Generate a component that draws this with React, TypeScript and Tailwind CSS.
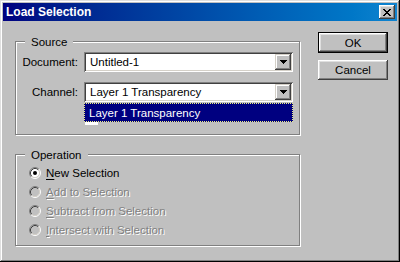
import React from 'react';

const raised =
  'shadow-[inset_-1px_-1px_#404040,inset_1px_1px_#fff,inset_-2px_-2px_#808080,inset_2px_2px_#dfdfdf]';
const sunken =
  'shadow-[inset_1px_1px_#808080,inset_-1px_-1px_#fff,inset_2px_2px_#404040,inset_-2px_-2px_#d4d0c8]';

function Combo({ value, children }: { value: string; children?: React.ReactNode }) {
  return (
    <div className={`relative flex h-[20px] w-[209px] items-center bg-white ${sunken}`}>
      <span className="flex-1 pl-[6px] leading-[14px] text-black">{value}</span>
      <div
        className={`mr-[2px] flex h-[16px] w-[16px] items-center justify-center bg-[#c0c0c0] shadow-[inset_-1px_-1px_#404040,inset_1px_1px_#d4d0c8,inset_-2px_-2px_#808080,inset_2px_2px_#fff]`}
      >
        <svg width="7" height="4" viewBox="0 0 7 4" shapeRendering="crispEdges">
          <polygon points="0,0 7,0 3.5,4" fill="#000" />
        </svg>
      </div>
      {children}
    </div>
  );
}

function Radio({ checked, disabled }: { checked?: boolean; disabled?: boolean }) {
  return (
    <svg width="12" height="12" viewBox="0 0 12 12">
      <circle cx="6" cy="6" r="4.5" fill={disabled ? '#c0c0c0' : '#fff'} />
      <path d="M2.11 9.89 A5.5 5.5 0 0 1 9.89 2.11" stroke="#808080" fill="none" />
      <path d="M9.89 2.11 A5.5 5.5 0 0 1 2.11 9.89" stroke="#fff" fill="none" />
      <path d="M2.82 9.18 A4.5 4.5 0 0 1 9.18 2.82" stroke="#404040" fill="none" />
      <path d="M9.18 2.82 A4.5 4.5 0 0 1 2.82 9.18" stroke="#d4d0c8" fill="none" />
      {checked && <circle cx="6" cy="6" r="2" fill="#000" />}
    </svg>
  );
}

function Group({ title, className, children }: { title: string; className: string; children: React.ReactNode }) {
  return (
    <div
      className={`relative w-[285px] border border-[#808080] shadow-[inset_1px_1px_#fff,1px_1px_#fff] ${className}`}
    >
      <span className="absolute left-[9px] top-[-7px] bg-[#c0c0c0] px-[6px] leading-[14px] text-black">
        {title}
      </span>
      {children}
    </div>
  );
}

const operations = [
  { key: 'N', rest: 'ew Selection', checked: true },
  { key: 'A', rest: 'dd to Selection' },
  { key: 'S', rest: 'ubtract from Selection' },
  { key: 'I', rest: 'ntersect with Selection' },
];

export default function App() {
  return (
    <div className="h-[262px] w-[400px] bg-[#c0c0c0] p-[3px] font-['Liberation_Sans',Arial,sans-serif] text-[11.5px] shadow-[inset_-1px_-1px_#000,inset_1px_1px_#dfdfdf,inset_-2px_-2px_#808080,inset_2px_2px_#fff]">
      {/* title bar */}
      <div className="flex h-[18px] items-center justify-between bg-gradient-to-r from-[#000080] to-[#1084d0] pl-[3px] pr-[2px]">
        <span className="text-[12px] font-bold leading-[18px] text-white">Load Selection</span>
        <div className={`flex h-[14px] w-[16px] items-center justify-center bg-[#c0c0c0] ${raised}`}>
          <svg width="8" height="7" viewBox="0 0 8 7" shapeRendering="crispEdges">
            <path d="M0 0h2v1h-2zM6 0h2v1h-2zM1 1h2v1h-2zM5 1h2v1h-2zM2 2h4v1h-4zM3 3h2v1h-2zM2 4h4v1h-4zM1 5h2v1h-2zM5 5h2v1h-2zM0 6h2v1h-2zM6 6h2v1h-2z" fill="#000" />
          </svg>
        </div>
      </div>

      {/* body */}
      <div className="flex items-start pl-[12px]">
        <div className="mt-[20px] flex flex-col gap-[19px]">
          <Group title="Source" className="h-[94px] pt-[10px]">
            <div className="flex flex-col gap-[10px]">
              <div className="flex items-center gap-[6px]">
                <span className="w-[62px] text-right leading-[14px] text-black">Document:</span>
                <Combo value="Untitled-1" />
              </div>
              <div className="flex items-center gap-[6px]">
                <span className="w-[62px] text-right leading-[14px] text-black">Channel:</span>
                <Combo value="Layer 1 Transparency">
                  <div className="absolute left-0 top-[21px] flex h-[19px] w-[209px] items-center border border-dotted border-[#f0f080] bg-[#000080] pl-[4px] leading-[14px] text-white">
                    Layer 1 Transparency
                  </div>
                  <div className="absolute left-[1px] top-[40px] h-[3px] w-[13px] bg-white" />
                </Combo>
              </div>
            </div>
          </Group>

          <Group title="Operation" className="h-[92px] pt-[8px]">
            <div className="flex flex-col">
              {operations.map((op, i) => {
                const disabled = !op.checked;
                return (
                  <div key={i} className="flex h-[19px] items-center gap-[5px] pl-[13px]">
                    <Radio checked={op.checked} disabled={disabled} />
                    <span
                      className={
                        disabled
                          ? 'leading-[14px] text-[#808080] [text-shadow:1px_1px_0_#fff]'
                          : 'leading-[14px] text-black'
                      }
                    >
                      <span className="underline underline-offset-[2px]">{op.key}</span>
                      {op.rest}
                    </span>
                  </div>
                );
              })}
            </div>
          </Group>
        </div>

        <div className="ml-[18px] mt-[11px] flex flex-col gap-[7px]">
          <div className={`flex h-[21px] w-[70px] items-center justify-center border border-black bg-[#c0c0c0] leading-[14px] text-black ${raised}`}>
            OK
          </div>
          <div className={`flex h-[20px] w-[70px] items-center justify-center bg-[#c0c0c0] leading-[14px] text-black ${raised}`}>
            Cancel
          </div>
        </div>
      </div>
    </div>
  );
}
